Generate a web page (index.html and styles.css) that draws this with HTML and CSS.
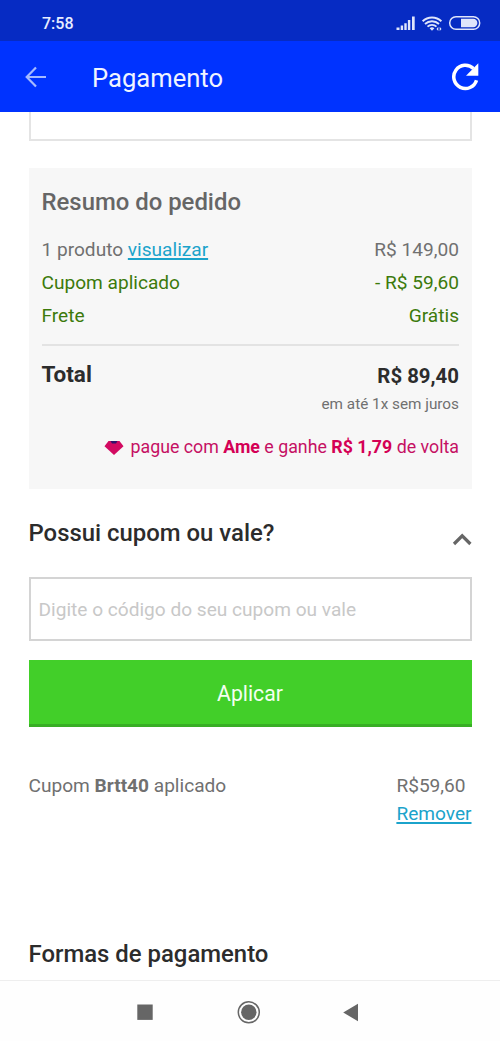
FILE: index.html
```html
<!DOCTYPE html>
<html lang="pt-BR">
<head>
<meta charset="utf-8">
<meta name="viewport" content="width=device-width, initial-scale=1">
<title>Pagamento</title>
<link rel="stylesheet" href="styles.css">
</head>
<body>
<div class="screen">
  <div class="status">
    <span class="clock">7:58</span>
    <svg class="status-icons" width="88" height="20" viewBox="0 0 88 20" aria-hidden="true">
      <g fill="#dfe5fb">
        <path d="M.5 13.500h3v2.500h-3zM4.700 11.500h2.400v4.500H4.700zM8.300 9.200h2.400V16H8.300zM11.900 6h2.400v10h-2.400zM16 2.500h2.700V16H16z"/>
        <path d="M33.600 14.200a3.600 3.600 0 0 1 4.800 0L36 16.800z"/>
        <path d="M42.300 12.700l-1.800 2.200 1.800 2.200zM43.700 12.700l1.800 2.200-1.800 2.200z"/>
      </g>
      <g fill="none" stroke="#dfe5fb">
        <path stroke-width="1.900" d="M26.600 7.200a13.600 13.600 0 0 1 18.800 0M29 10a10.200 10.200 0 0 1 14 0M31.500 12.600a6.600 6.600 0 0 1 9 0"/>
        <rect x="53.700" y="2.700" width="30" height="12.600" rx="6.300" stroke-width="1.500"/>
      </g>
      <path fill="#dfe5fb" d="M65 4.800h12.200a4.200 4.200 0 0 1 0 8.400H65z"/>
    </svg>
  </div>
  <header class="toolbar">
    <svg class="back" width="22" height="22" viewBox="0 0 22 22" aria-hidden="true"><path d="M21 11H2M11 1.500 1.700 11l9.300 9.500"/></svg>
    <h1 class="title">Pagamento</h1>
    <svg class="reload" width="28" height="28" viewBox="0 0 28 28" aria-hidden="true">
      <path class="arc" d="M24.500 17.200A11.600 11.600 0 1 1 21.500 5.600"/>
      <path class="head" d="M26.300 .3v12.400H14z"/>
    </svg>
  </header>
  <main class="content">
    <div class="prev-box"></div>
    <section class="summary">
      <h2 class="summary-title"><span>Resumo do pedido</span></h2>
      <div class="row"><span>1 produto <a class="link">visualizar</a></span><span>R$ 149,00</span></div>
      <div class="row green"><span>Cupom aplicado</span><span>- R$ 59,60</span></div>
      <div class="row green"><span>Frete</span><span>Grátis</span></div>
      <div class="total">
        <span class="total-label">Total</span>
        <div class="amount"><b class="price">R$ 89,40</b><span class="terms">em até 1x sem juros</span></div>
      </div>
      <div class="ame">
        <svg width="20" height="15" viewBox="0 0 20 15" aria-hidden="true">
          <path fill="#d20a61" d="M4.500 1h11l4 5.200L10 15 .5 6.200z"/><path fill="#31126b" d="M6.500 1h7l-1.500 2.500H8z"/>
        </svg>
        <span>pague com <b>Ame</b> e ganhe <b>R$ 1,79</b> de volta</span>
      </div>
    </section>
    <div class="coupon-head">
      <h2 class="heading"><span>Possui cupom ou vale?</span></h2>
      <svg class="chevron" width="20" height="14" viewBox="0 0 20 14" aria-hidden="true"><path d="M2 12 10.200 3.800 18.400 12"/></svg>
    </div>
    <div class="field"><span>Digite o código do seu cupom ou vale</span></div>
    <div class="apply"><span>Aplicar</span></div>
    <div class="applied">
      <span>Cupom <b>Brtt40</b> aplicado</span>
      <div class="applied-value"><span>R$59,60</span><a class="link">Remover</a></div>
    </div>
    <h2 class="heading methods"><span>Formas de pagamento</span></h2>
  </main>
  <nav class="nav">
    <svg width="500" height="60" viewBox="0 0 500 60" fill="#666" aria-hidden="true">
      <rect x="137.300" y="23.500" width="15.400" height="15.400"/>
      <circle cx="248.800" cy="31.300" r="10.500" fill="none" stroke="#666" stroke-width="1.500"/>
      <circle cx="248.800" cy="31.300" r="7.700"/>
      <path d="M358 22.800v17.400L343.200 31.500z"/>
    </svg>
  </nav>
</div>
</body>
</html>
```
FILE: styles.css
```css
* { box-sizing: border-box; }
body { margin: 0; font-family: Roboto, sans-serif; font-size: 19.100px; color: #707070; background: #fff; }
h1, h2 { margin: 0; font-weight: 500; }
b { font-weight: 700; }
span, a { white-space: nowrap; }
svg { display: block; flex: none; }
.screen { width: 500px; height: 1041px; display: flex; flex-direction: column; overflow: hidden; }
.status { height: 41px; padding: 6px 16px 0 42px; background: #062bc3; display: flex; align-items: center; justify-content: space-between; }
.clock { color: #e8edff; font-size: 16px; font-weight: 500; }
.toolbar { height: 71px; padding: 0 20px 0 25px; background: #0033ff; display: flex; align-items: center; }
.back path { fill: none; stroke: #a5baff; stroke-width: 2.200px; }
.title { flex: 1; margin-left: 45px; padding-top: 3px; font-size: 25.600px; font-weight: 400; color: #f0f4ff; }
.arc { fill: none; stroke: #fff; stroke-width: 3.500px; }
.head { fill: #fff; }
.content { flex: 1; padding: 0 28.500px; }
.prev-box { height: 29px; border: 2px solid #e4e4e4; border-top: 0; }
.summary { height: 321px; margin-top: 27px; padding: 18px 12.500px 0 13px; background: #f7f7f7; }
.summary-title { height: 32px; margin-bottom: 15px; line-height: 32px; font-size: 23.900px; color: #666; }
.row { height: 33.200px; line-height: 33px; display: flex; justify-content: space-between; }
.green { color: #3c7a0b; }
.link { color: #1ba3cb; text-decoration: underline; text-decoration-thickness: 1.500px; text-underline-offset: 2px; }
.total { height: 72px; margin-top: 11.400px; padding-top: 14px; border-top: 2px solid #e3e3e3; display: flex; justify-content: space-between; color: #2c2c2c; }
.total-label { font-size: 22.500px; font-weight: 700; line-height: 28px; }
.amount { display: flex; flex-direction: column; align-items: flex-end; }
.price { font-size: 20.400px; line-height: 33px; }
.terms { font-size: 15.300px; line-height: 22px; color: #707070; }
.ame { height: 30px; margin-top: 16px; display: flex; align-items: center; justify-content: flex-end; gap: 6px; font-size: 17.800px; color: #c51063; }
.ame svg { margin-top: 2px; }
.ame b { color: #d40055; }
.coupon-head { height: 88px; padding-top: 28px; display: flex; justify-content: space-between; }
.heading { font-size: 23.900px; line-height: 32px; color: #2c2c2c; }
.chevron { margin-top: 15px; }
.chevron path { fill: none; stroke: #666; stroke-width: 3.200px; }
.field { height: 64px; padding: 1px 0 0 8px; border: 2px solid #d4d4d4; display: flex; align-items: center; color: #c8c8c8; }
.apply { height: 67px; margin-top: 19px; padding-top: 2px; background: #42cf29; border-bottom: 3px solid #38ae25; display: flex; align-items: center; justify-content: center; color: #f3fff1; font-size: 21.200px; }
.applied { height: 114px; margin-top: 45px; display: flex; justify-content: space-between; line-height: 28px; }
.applied-value { display: flex; flex-direction: column; }
.methods { margin-top: 52px; }
.nav { height: 61px; border-top: 1px solid #eee; background: #fefefe; }
```
